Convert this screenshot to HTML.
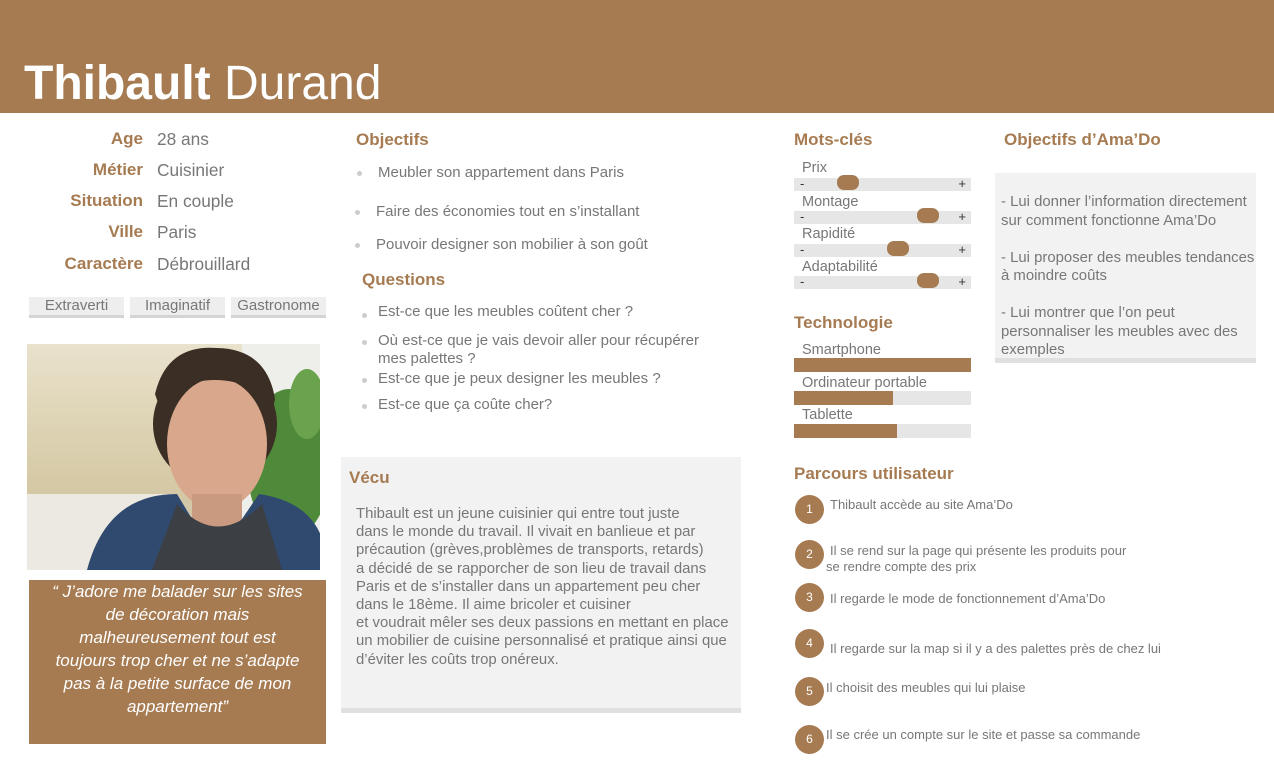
<!DOCTYPE html>
<html><head><meta charset="utf-8"><style>
*{margin:0;padding:0;box-sizing:border-box}
body{width:1274px;height:772px;background:#fff;position:relative;overflow:hidden;font-family:"Liberation Sans",Arial,sans-serif;color:#777}
.a{position:absolute;white-space:nowrap}
.h{color:#a67b52;font-weight:bold;font-size:17px}
.lab{position:absolute;right:1131px;color:#a67b52;font-weight:bold;font-size:17px;text-align:right}
.val{position:absolute;left:157px;font-size:17.3px;color:#777}
.tag{position:absolute;top:297px;height:21px;background:#eee;border-bottom:3px solid #d4d4d4;font-size:15px;color:#777;text-align:center;line-height:18px}
.li{position:absolute;font-size:15px;color:#777;white-space:nowrap}
.dot{position:absolute;width:5px;height:5px;border-radius:50%;background:#ccc}
.sl{position:absolute;left:794px;width:177px;height:13px;background:#e6e6e6;font-size:13px;color:#333;line-height:12px}
.sl .m{position:absolute;left:6px}.sl .p{position:absolute;right:5px}
.sl .k{position:absolute;top:-3px;width:22px;height:15px;border-radius:7px;background:#a67b52}
.sk{position:absolute;left:802px;font-size:14.5px;color:#777}
.tb{position:absolute;left:794px;width:177px;height:14px;background:#e6e6e6}
.tb i{display:block;height:100%;background:#a67b52}
.num{position:absolute;left:795px;width:29px;height:29px;border-radius:50%;background:#a67b52;color:#fff;font-size:12px;text-align:center;line-height:29px}
.st{position:absolute;font-size:13px;color:#777;white-space:nowrap;line-height:16px}
</style></head><body>
<div class="a" style="left:0;top:0;width:1274px;height:113px;background:#a67b52"></div>
<div class="a" style="left:24px;top:55px;font-size:48px;color:#fff;line-height:58px"><b>Thibault</b> Durand</div>

<div class="lab" style="top:129px">Age</div><div class="val" style="top:129px">28 ans</div>
<div class="lab" style="top:160px">Métier</div><div class="val" style="top:160px">Cuisinier</div>
<div class="lab" style="top:191px">Situation</div><div class="val" style="top:191px">En couple</div>
<div class="lab" style="top:222px">Ville</div><div class="val" style="top:222px">Paris</div>
<div class="lab" style="top:254px">Caractère</div><div class="val" style="top:254px">Débrouillard</div>

<div class="tag" style="left:29px;width:95px">Extraverti</div>
<div class="tag" style="left:130px;width:95px">Imaginatif</div>
<div class="tag" style="left:231px;width:95px">Gastronome</div>

<svg class="a" style="left:27px;top:344px" width="293" height="226" viewBox="0 0 293 226">
<defs><linearGradient id="w" x1="0" y1="0" x2="0" y2="1"><stop offset="0" stop-color="#e9e2cc"/><stop offset=".6" stop-color="#d6caa6"/><stop offset="1" stop-color="#c9c0a8"/></linearGradient></defs>
<rect width="293" height="226" fill="url(#w)"/>
<rect x="0" y="150" width="150" height="76" fill="#ece8e2"/>
<rect x="215" y="0" width="78" height="226" fill="#eeeeea"/>
<ellipse cx="262" cy="120" rx="42" ry="75" fill="#4f8a3a"/>
<ellipse cx="280" cy="60" rx="18" ry="35" fill="#6aa24d"/>
<ellipse cx="188" cy="80" rx="62" ry="62" fill="#3b2e25"/>
<ellipse cx="190" cy="100" rx="50" ry="66" fill="#d9a88c"/>
<path d="M128 50 Q140 0 190 4 Q240 5 248 55 L242 85 Q232 50 215 40 Q180 30 150 45 L140 85 Z" fill="#3b2e25"/>
<rect x="165" y="150" width="50" height="35" fill="#c99a80"/>
<path d="M60 226 Q80 150 150 150 L165 175 Q190 200 215 175 L232 150 Q300 160 300 226Z" fill="#2f4a6e"/>
<path d="M125 226 L150 160 Q190 205 235 160 L255 226Z" fill="#3c3f44"/>
</svg>
<div class="a" style="left:29px;top:580px;width:297px;height:164px;background:#a67b52;color:#fff;font-style:italic;font-size:17px;line-height:23px;text-align:center;padding-top:0">“ J’adore me balader sur les sites<br>de décoration mais<br>malheureusement tout est<br>toujours trop cher et ne s’adapte<br>pas à la petite surface de mon<br>appartement”</div>

<div class="a h" style="left:356px;top:130px">Objectifs</div>
<div class="dot" style="left:357px;top:171px"></div><div class="li" style="left:378px;top:164px">Meubler son appartement dans Paris</div>
<div class="dot" style="left:355px;top:210px"></div><div class="li" style="left:376px;top:203px">Faire des économies tout en s’installant</div>
<div class="dot" style="left:355px;top:243px"></div><div class="li" style="left:376px;top:236px">Pouvoir designer son mobilier à son goût</div>
<div class="a h" style="left:362px;top:270px">Questions</div>
<div class="dot" style="left:362px;top:313px"></div><div class="li" style="left:378px;top:303px">Est-ce que les meubles coûtent cher ?</div>
<div class="dot" style="left:362px;top:340px"></div><div class="li" style="left:378px;top:332px;line-height:18px">Où est-ce que je vais devoir aller pour récupérer<br>mes palettes ?</div>
<div class="dot" style="left:362px;top:378px"></div><div class="li" style="left:378px;top:370px">Est-ce que je peux designer les meubles ?</div>
<div class="dot" style="left:362px;top:404px"></div><div class="li" style="left:378px;top:396px">Est-ce que ça coûte cher?</div>

<div class="a" style="left:341px;top:457px;width:400px;height:256px;background:#f2f2f2;border-bottom:5px solid #e0e0e0"></div>
<div class="a h" style="left:349px;top:468px">Vécu</div>
<div class="li" style="left:356px;top:505px;font-size:14.9px;line-height:18.2px">Thibault est un jeune cuisinier qui entre tout juste<br>dans le monde du travail. Il vivait en banlieue et par<br>précaution (grèves,problèmes de transports, retards)<br>a décidé de se rapporcher de son lieu de travail dans<br>Paris et de s’installer dans un appartement peu cher<br>dans le 18ème. Il aime bricoler et cuisiner<br>et voudrait mêler ses deux passions en mettant en place<br>un mobilier de cuisine personnalisé et pratique ainsi que<br>d’éviter les coûts trop onéreux.</div>

<div class="a h" style="left:794px;top:130px">Mots-clés</div>
<div class="sk" style="top:160px">Prix</div>
<div class="sl" style="top:178px"><span class="m">-</span><span class="p">+</span><span class="k" style="left:43px"></span></div>
<div class="sk" style="top:194px">Montage</div>
<div class="sl" style="top:211px"><span class="m">-</span><span class="p">+</span><span class="k" style="left:123px"></span></div>
<div class="sk" style="top:226px">Rapidité</div>
<div class="sl" style="top:244px"><span class="m">-</span><span class="p">+</span><span class="k" style="left:93px"></span></div>
<div class="sk" style="top:259px">Adaptabilité</div>
<div class="sl" style="top:276px"><span class="m">-</span><span class="p">+</span><span class="k" style="left:123px"></span></div>

<div class="a h" style="left:794px;top:313px">Technologie</div>
<div class="sk" style="top:342px">Smartphone</div>
<div class="tb" style="top:358px"><i style="width:100%"></i></div>
<div class="sk" style="top:375px">Ordinateur portable</div>
<div class="tb" style="top:391px"><i style="width:56%"></i></div>
<div class="sk" style="top:407px">Tablette</div>
<div class="tb" style="top:424px"><i style="width:58%"></i></div>

<div class="a h" style="left:1004px;top:130px">Objectifs d’Ama’Do</div>
<div class="a" style="left:995px;top:173px;width:261px;height:190px;background:#f2f2f2;border-bottom:5px solid #e0e0e0"></div>
<div class="li" style="left:1001px;top:193px;line-height:18.5px;font-size:14.9px">- Lui donner l’information directement<br>sur comment fonctionne Ama’Do<br><br>- Lui proposer des meubles tendances<br>à moindre coûts<br><br>- Lui montrer que l’on peut<br>personnaliser les meubles avec des<br>exemples</div>

<div class="a h" style="left:794px;top:464px">Parcours utilisateur</div>
<div class="num" style="top:495px">1</div><div class="st" style="left:830px;top:497px">Thibault accède au site Ama’Do</div>
<div class="num" style="top:540px">2</div><div class="st" style="left:830px;top:543px">Il se rend sur la page qui présente les produits pour<br><span style="margin-left:-4px">se rendre compte des prix</span></div>
<div class="num" style="top:583px">3</div><div class="st" style="left:830px;top:591px">Il regarde le mode de fonctionnement d’Ama’Do</div>
<div class="num" style="top:629px">4</div><div class="st" style="left:830px;top:641px">Il regarde sur la map si il y a des palettes près de chez lui</div>
<div class="num" style="top:677px">5</div><div class="st" style="left:826px;top:680px">Il choisit des meubles qui lui plaise</div>
<div class="num" style="top:725px">6</div><div class="st" style="left:826px;top:727px">Il se crée un compte sur le site et passe sa commande</div>
</body></html>
